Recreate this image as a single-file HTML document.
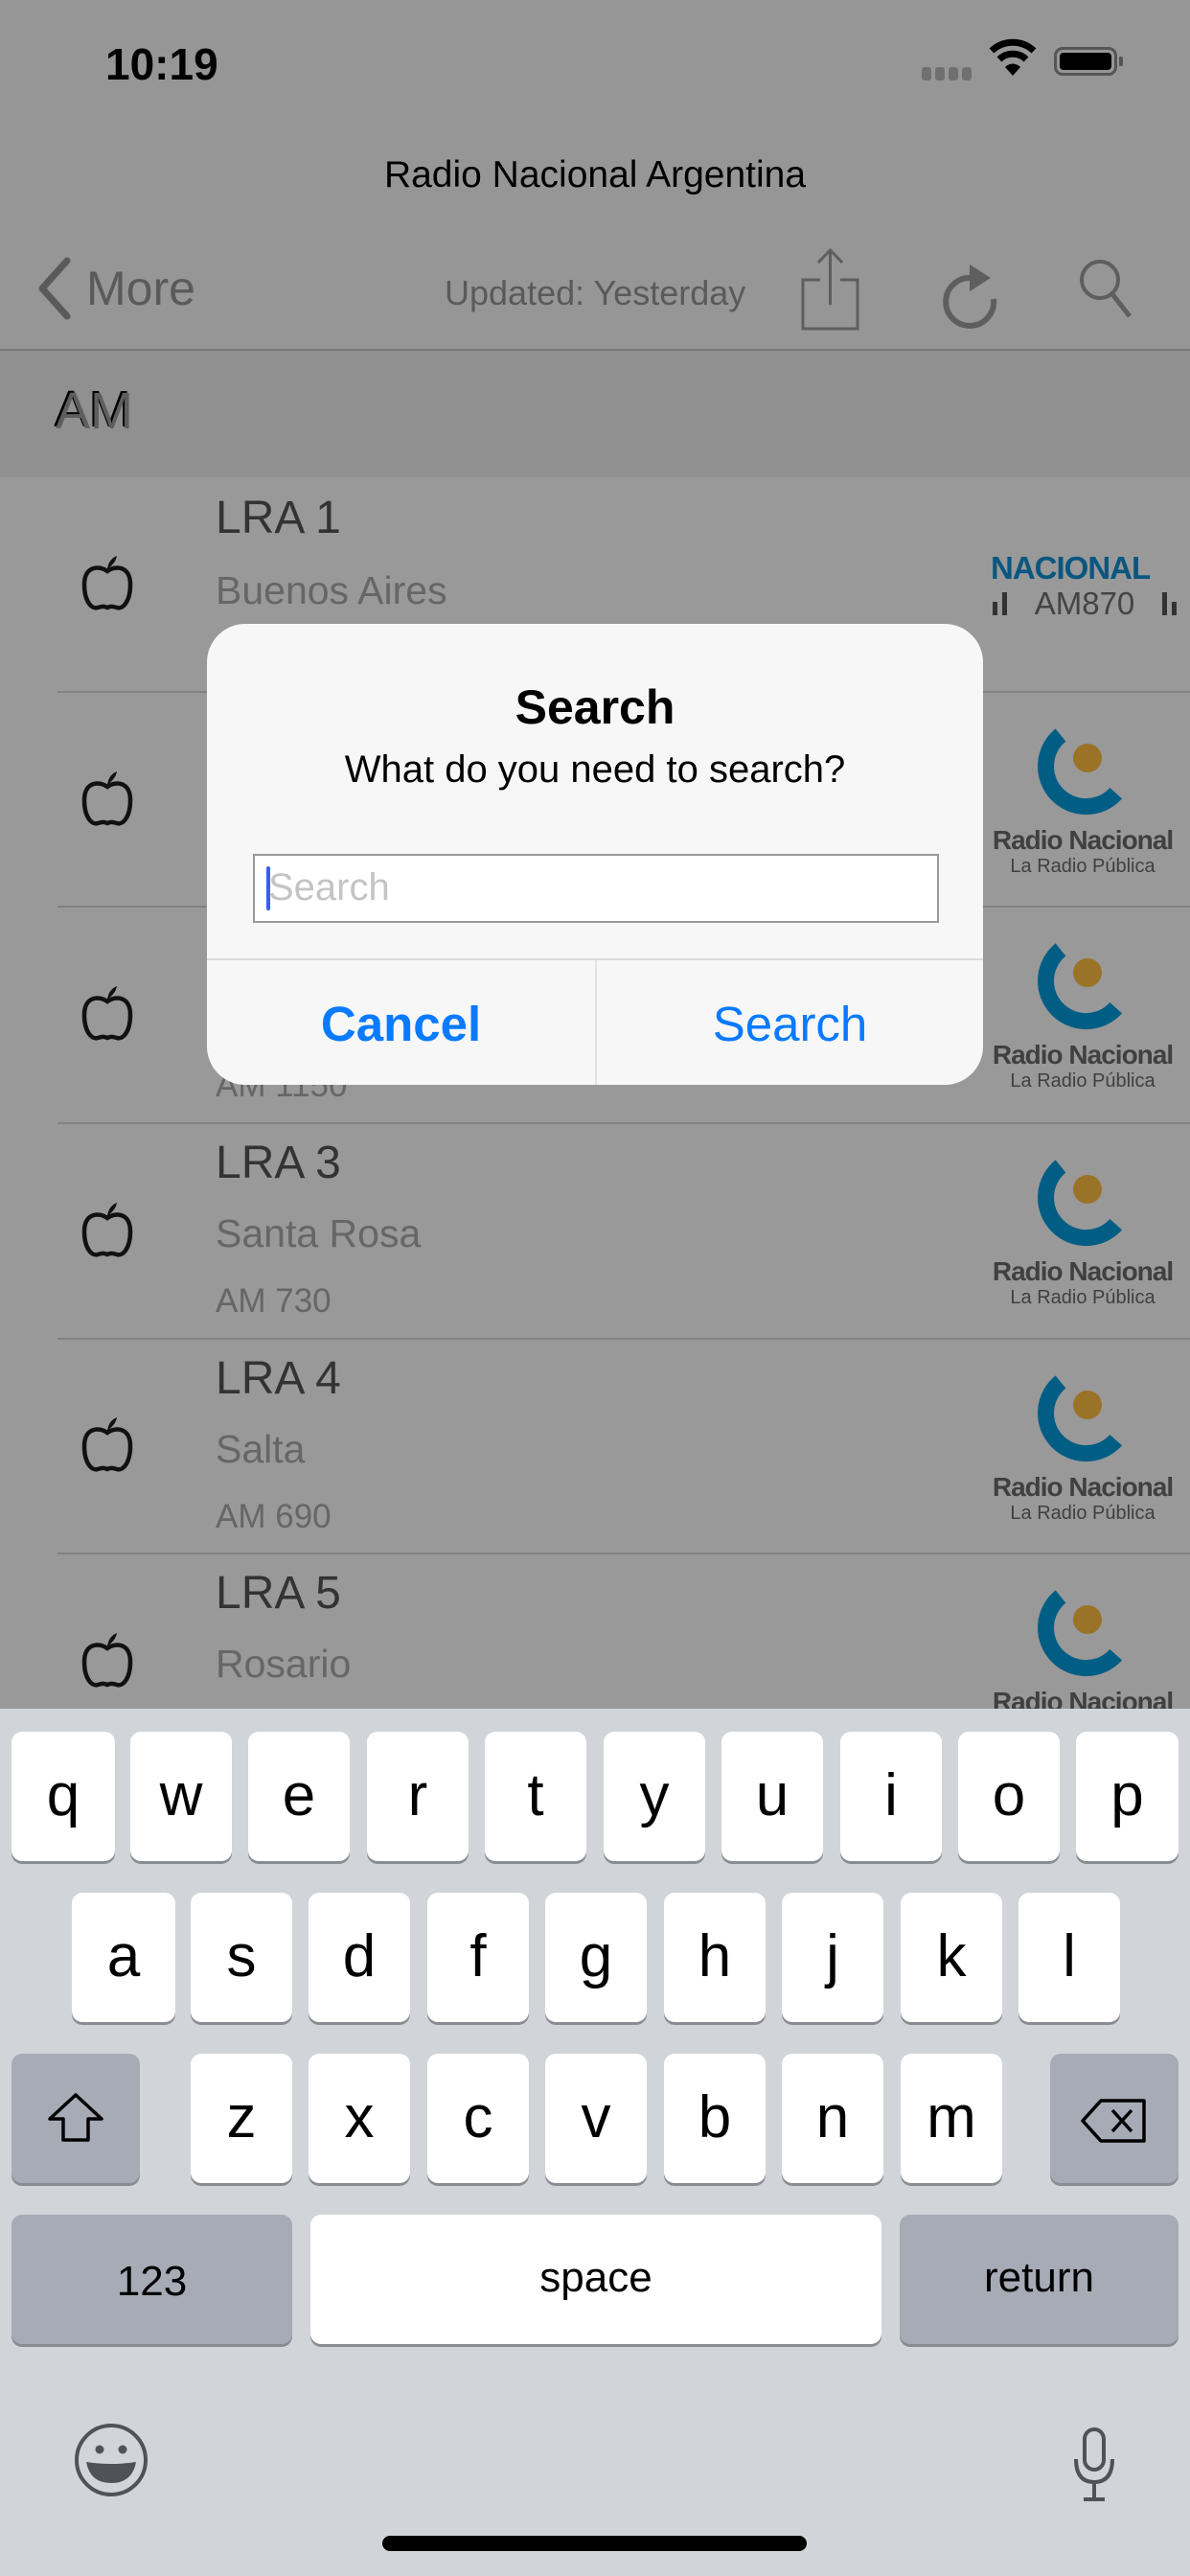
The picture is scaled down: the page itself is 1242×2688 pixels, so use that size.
<!DOCTYPE html>
<html><head><meta charset="utf-8">
<style>
*{margin:0;padding:0;box-sizing:border-box}
body{width:1242px;height:2688px;overflow:hidden;position:relative;background:#999;font-family:"Liberation Sans",Arial,sans-serif}
.a{position:absolute}
.t{white-space:nowrap}
.row{position:absolute;left:0;width:1242px;height:225px;background:#999}
.sep{position:absolute;left:60px;right:0;height:2px;background:#828282}
.rt{position:absolute;left:225px;font-size:48px;color:#333;line-height:1}
.rs{position:absolute;left:225px;font-size:41px;color:#666;line-height:1}
.r3{position:absolute;left:225px;font-size:35px;color:#666;line-height:1}
.key{position:absolute;background:#fff;border-radius:11px;box-shadow:0 3px 0 #898c92;font-size:62px;color:#000;text-align:center;height:135px;line-height:134px}
.gk{background:#a6abb6}
</style></head><body>
<div class="a" style="left:0;top:0;width:1242px;height:365px;background:#969696"></div>
<div class="a t" style="left:110px;top:40px;font-size:46px;font-weight:bold;color:#000">10:19</div>
<div class="a" style="left:962px;top:70px;width:52px;height:14px">
 <span class="a" style="left:0;width:10px;height:14px;border-radius:3px;background:#707070"></span>
 <span class="a" style="left:14px;width:10px;height:14px;border-radius:3px;background:#707070"></span>
 <span class="a" style="left:28px;width:10px;height:14px;border-radius:3px;background:#707070"></span>
 <span class="a" style="left:42px;width:10px;height:14px;border-radius:3px;background:#707070"></span>
</div>
<svg class="a" style="left:1032px;top:38px" width="50" height="44" viewBox="0 0 50 44"><path d="M3 15 A32 32 0 0 1 47 15" stroke="#000" stroke-width="7" fill="none"/><path d="M11 24 A20 20 0 0 1 39 24" stroke="#000" stroke-width="7" fill="none"/><path d="M17 32 L25 41 L33 32 A11 11 0 0 0 17 32Z" fill="#000"/></svg>
<div class="a" style="left:1100px;top:49px;width:66px;height:30px;border:3px solid #555;border-radius:9px;padding:3px"><div style="width:100%;height:100%;background:#000;border-radius:4px"></div></div>
<div class="a" style="left:1168px;top:59px;width:4px;height:10px;background:#555;border-radius:0 2px 2px 0"></div>

<div class="a t" style="left:0;width:1242px;text-align:center;top:161px;font-size:39px;color:#000">Radio Nacional Argentina</div>

<svg class="a" style="left:36px;top:268px" width="40" height="66" viewBox="0 0 40 66"><path d="M34 4 L8 33 L34 62" stroke="#5a5a5a" stroke-width="7" fill="none" stroke-linecap="round" stroke-linejoin="round"/></svg>
<div class="a t" style="left:90px;top:272px;font-size:50px;color:#5a5a5a">More</div>
<div class="a t" style="left:464px;top:285px;font-size:36px;color:#5a5a5a">Updated: Yesterday</div>
<svg class="a" style="left:834px;top:258px" width="66" height="88" viewBox="0 0 66 88"><path d="M22 34 H4 V85 H61 V34 H43" stroke="#5e5e5e" stroke-width="3" fill="none"/><path d="M32.5 60 V3 M20 16 L32.5 3 L45 16" stroke="#5e5e5e" stroke-width="3" fill="none"/></svg>
<svg class="a" style="left:978px;top:262px" width="70" height="86" viewBox="0 0 70 86"><path d="M36 28 A25 25 0 1 0 59 50" stroke="#5e5e5e" stroke-width="6" fill="none"/><path d="M34 14 L56 28 L34 42Z" fill="#5e5e5e"/></svg>
<svg class="a" style="left:1124px;top:268px" width="60" height="70" viewBox="0 0 60 70"><circle cx="24" cy="24" r="19" stroke="#5e5e5e" stroke-width="4" fill="none"/><path d="M37 39 L55 62" stroke="#5e5e5e" stroke-width="5"/></svg>
<div class="a" style="left:0;top:364px;width:1242px;height:2px;background:#777"></div>

<div class="a" style="left:0;top:366px;width:1242px;height:132px;background:#909090"></div>
<div class="a t" style="left:58px;top:398px;font-size:54px;color:#5e5e5e;text-shadow:-2px -2px 0 #000">AM</div>

<svg width="0" height="0" style="position:absolute"><defs>
<g id="ap"><path d="M28 18 C20 12 4 12 4 32 C4 50 12 58 18 56 C22 55 24 54 28 56 C32 54 34 55 38 56 C44 58 52 50 52 32 C52 12 36 12 28 18Z" stroke="#111" stroke-width="4.5" fill="none"/><path d="M28 16 C29 8 33 4 38 2 C37 8 33 12 28 16Z" fill="#111"/></g>
</defs></svg>

<div class="row" style="top:498px">
 <svg class="a" style="left:84px;top:80px" width="56" height="60" viewBox="0 0 56 60"><use href="#ap"/></svg>
 <div class="rt t" style="top:19px">LRA 1</div>
 <div class="rs t" style="top:98px">Buenos Aires</div>
 <div class="a t" style="left:1034px;top:76px;font-size:33px;font-weight:bold;color:#0a5680;letter-spacing:-1px">NACIONAL</div>
 <svg class="a" style="left:1036px;top:112px" width="192" height="34" viewBox="0 0 192 34"><rect x="0" y="18" width="5" height="14" fill="#333"/><rect x="10" y="8" width="5" height="24" fill="#333"/><rect x="177" y="8" width="5" height="24" fill="#333"/><rect x="187" y="18" width="5" height="14" fill="#333"/><text x="96" y="31" text-anchor="middle" font-family="Liberation Sans, sans-serif" font-size="33" fill="#444">AM870</text></svg>
</div>
<div class="sep" style="top:721px"></div>

<div class="row" style="top:723px"></div>
<div class="sep" style="top:945px"></div>
<div class="row" style="top:947px"><div class="r3 t" style="top:168px">AM 1150</div></div>
<div class="sep" style="top:1171px"></div>
<div class="row" style="top:1173px">
 <div class="rt t" style="top:17px">LRA 3</div>
 <div class="rs t" style="top:94px">Santa Rosa</div>
 <div class="r3 t" style="top:167px">AM 730</div>
</div>
<div class="sep" style="top:1396px"></div>
<div class="row" style="top:1398px">
 <div class="rt t" style="top:17px">LRA 4</div>
 <div class="rs t" style="top:94px">Salta</div>
 <div class="r3 t" style="top:167px">AM 690</div>
</div>
<div class="sep" style="top:1620px"></div>
<div class="row" style="top:1622px;height:170px">
 <div class="rt t" style="top:17px">LRA 5</div>
 <div class="rs t" style="top:94px">Rosario</div>
</div>

<svg class="a" style="left:84px;top:803px" width="56" height="60" viewBox="0 0 56 60"><use href="#ap"/></svg>
<svg class="a" style="left:84px;top:1027px" width="56" height="60" viewBox="0 0 56 60"><use href="#ap"/></svg>
<svg class="a" style="left:84px;top:1253px" width="56" height="60" viewBox="0 0 56 60"><use href="#ap"/></svg>
<svg class="a" style="left:84px;top:1477px" width="56" height="60" viewBox="0 0 56 60"><use href="#ap"/></svg>
<svg class="a" style="left:84px;top:1702px" width="56" height="60" viewBox="0 0 56 60"><use href="#ap"/></svg>

<div class="a" style="left:1030px;top:723px;width:200px;height:225px">
 <svg class="a" style="left:50px;top:20px" width="110" height="110" viewBox="-55 -55 110 110"><path d="M29.7 29.7 A42 42 0 1 1 -28 -31" stroke="#005e85" stroke-width="17" fill="none"/><circle cx="0" cy="-7" r="15" fill="#9a7328"/></svg>
 <div class="a t" style="left:0;width:200px;text-align:center;top:138px;font-size:28px;font-weight:bold;color:#404040;letter-spacing:-1px">Radio Nacional</div>
 <div class="a t" style="left:0;width:200px;text-align:center;top:170px;font-size:20px;color:#404040">La Radio Pública</div>
</div>
<div class="a" style="left:1030px;top:947px;width:200px;height:225px">
 <svg class="a" style="left:50px;top:20px" width="110" height="110" viewBox="-55 -55 110 110"><path d="M29.7 29.7 A42 42 0 1 1 -28 -31" stroke="#005e85" stroke-width="17" fill="none"/><circle cx="0" cy="-7" r="15" fill="#9a7328"/></svg>
 <div class="a t" style="left:0;width:200px;text-align:center;top:138px;font-size:28px;font-weight:bold;color:#404040;letter-spacing:-1px">Radio Nacional</div>
 <div class="a t" style="left:0;width:200px;text-align:center;top:170px;font-size:20px;color:#404040">La Radio Pública</div>
</div>
<div class="a" style="left:1030px;top:1173px;width:200px;height:225px">
 <svg class="a" style="left:50px;top:20px" width="110" height="110" viewBox="-55 -55 110 110"><path d="M29.7 29.7 A42 42 0 1 1 -28 -31" stroke="#005e85" stroke-width="17" fill="none"/><circle cx="0" cy="-7" r="15" fill="#9a7328"/></svg>
 <div class="a t" style="left:0;width:200px;text-align:center;top:138px;font-size:28px;font-weight:bold;color:#404040;letter-spacing:-1px">Radio Nacional</div>
 <div class="a t" style="left:0;width:200px;text-align:center;top:170px;font-size:20px;color:#404040">La Radio Pública</div>
</div>
<div class="a" style="left:1030px;top:1398px;width:200px;height:225px">
 <svg class="a" style="left:50px;top:20px" width="110" height="110" viewBox="-55 -55 110 110"><path d="M29.7 29.7 A42 42 0 1 1 -28 -31" stroke="#005e85" stroke-width="17" fill="none"/><circle cx="0" cy="-7" r="15" fill="#9a7328"/></svg>
 <div class="a t" style="left:0;width:200px;text-align:center;top:138px;font-size:28px;font-weight:bold;color:#404040;letter-spacing:-1px">Radio Nacional</div>
 <div class="a t" style="left:0;width:200px;text-align:center;top:170px;font-size:20px;color:#404040">La Radio Pública</div>
</div>
<div class="a" style="left:1030px;top:1622px;width:200px;height:161px;overflow:hidden">
 <svg class="a" style="left:50px;top:20px" width="110" height="110" viewBox="-55 -55 110 110"><path d="M29.7 29.7 A42 42 0 1 1 -28 -31" stroke="#005e85" stroke-width="17" fill="none"/><circle cx="0" cy="-7" r="15" fill="#9a7328"/></svg>
 <div class="a t" style="left:0;width:200px;text-align:center;top:138px;font-size:28px;font-weight:bold;color:#404040;letter-spacing:-1px">Radio Nacional</div>
</div>

<div class="a" style="left:216px;top:651px;width:810px;height:481px;background:#f7f7f7;border-radius:40px;overflow:hidden">
 <div class="a t" style="left:0;width:810px;text-align:center;top:58px;font-size:50px;font-weight:bold;color:#000">Search</div>
 <div class="a t" style="left:0;width:810px;text-align:center;top:130px;font-size:40px;color:#000">What do you need to search?</div>
 <div class="a" style="left:48px;top:240px;width:716px;height:72px;background:#fff;border:2px solid #999"></div>
 <div class="a" style="left:62px;top:253px;width:4px;height:46px;background:#3a5cf0;border-radius:2px"></div>
 <div class="a t" style="left:64px;top:253px;font-size:40px;color:#c4c4c6">Search</div>
 <div class="a" style="left:0;top:349px;width:810px;height:2px;background:#dcdcdc"></div>
 <div class="a" style="left:405px;top:351px;width:2px;height:130px;background:#e2e2e2"></div>
 <div class="a t" style="left:0;width:405px;text-align:center;top:388px;font-size:51px;font-weight:bold;color:#0a7aff">Cancel</div>
 <div class="a t" style="left:407px;width:403px;text-align:center;top:388px;font-size:51px;color:#0a7aff">Search</div>
</div>

<div class="a" style="left:0;top:1783px;width:1242px;height:905px;background:#d1d4d9"></div>
<div class="key" style="left:12px;top:1807px;width:108px">q</div>
<div class="key" style="left:136px;top:1807px;width:106px">w</div>
<div class="key" style="left:259px;top:1807px;width:106px">e</div>
<div class="key" style="left:383px;top:1807px;width:106px">r</div>
<div class="key" style="left:506px;top:1807px;width:106px">t</div>
<div class="key" style="left:630px;top:1807px;width:106px">y</div>
<div class="key" style="left:753px;top:1807px;width:106px">u</div>
<div class="key" style="left:877px;top:1807px;width:106px">i</div>
<div class="key" style="left:1000px;top:1807px;width:106px">o</div>
<div class="key" style="left:1123px;top:1807px;width:107px">p</div>

<div class="key" style="left:75px;top:1975px;width:108px">a</div>
<div class="key" style="left:199px;top:1975px;width:106px">s</div>
<div class="key" style="left:322px;top:1975px;width:106px">d</div>
<div class="key" style="left:446px;top:1975px;width:106px">f</div>
<div class="key" style="left:569px;top:1975px;width:106px">g</div>
<div class="key" style="left:693px;top:1975px;width:106px">h</div>
<div class="key" style="left:816px;top:1975px;width:106px">j</div>
<div class="key" style="left:940px;top:1975px;width:106px">k</div>
<div class="key" style="left:1063px;top:1975px;width:106px">l</div>

<div class="key gk" style="left:12px;top:2143px;width:134px;line-height:0"><svg style="margin-top:40px" width="60" height="56" viewBox="0 0 60 56"><path d="M30 3 L57 28 H43 V50 H17 V28 H3Z" stroke="#000" stroke-width="3.5" fill="none" stroke-linejoin="round"/></svg></div>
<div class="key" style="left:199px;top:2143px;width:106px">z</div>
<div class="key" style="left:322px;top:2143px;width:106px">x</div>
<div class="key" style="left:446px;top:2143px;width:106px">c</div>
<div class="key" style="left:569px;top:2143px;width:106px">v</div>
<div class="key" style="left:693px;top:2143px;width:106px">b</div>
<div class="key" style="left:816px;top:2143px;width:106px">n</div>
<div class="key" style="left:940px;top:2143px;width:106px">m</div>
<div class="key gk" style="left:1096px;top:2143px;width:134px;line-height:0"><svg style="margin-top:46px" width="72" height="48" viewBox="0 0 72 48"><path d="M22 3 H67 V45 H22 L3 24Z" stroke="#000" stroke-width="3.5" fill="none" stroke-linejoin="round"/><path d="M34 13 L54 35 M54 13 L34 35" stroke="#000" stroke-width="3.5"/></svg></div>

<div class="key gk" style="left:12px;top:2311px;width:293px;font-size:44px;line-height:140px">123</div>
<div class="key" style="left:324px;top:2311px;width:596px;font-size:44px;line-height:132px">space</div>
<div class="key gk" style="left:939px;top:2311px;width:291px;font-size:44px;line-height:132px">return</div>

<svg class="a" style="left:76px;top:2527px" width="80" height="80" viewBox="0 0 80 80"><circle cx="40" cy="40" r="36" stroke="#505257" stroke-width="4" fill="none"/><circle cx="28" cy="29" r="4.5" fill="#505257"/><circle cx="52" cy="29" r="4.5" fill="#505257"/><path d="M14 42 Q40 46 66 42 Q62 64 40 64 Q18 64 14 42Z" fill="#505257"/></svg>
<svg class="a" style="left:1118px;top:2532px" width="48" height="80" viewBox="0 0 48 80"><rect x="14" y="3" width="20" height="42" rx="10" stroke="#505257" stroke-width="4" fill="none"/><path d="M5 34 Q5 58 24 58 Q43 58 43 34 M24 58 V74 M13 76 H35" stroke="#505257" stroke-width="4" fill="none"/></svg>
<div class="a" style="left:399px;top:2646px;width:443px;height:16px;background:#000;border-radius:8px"></div>
</body></html>
